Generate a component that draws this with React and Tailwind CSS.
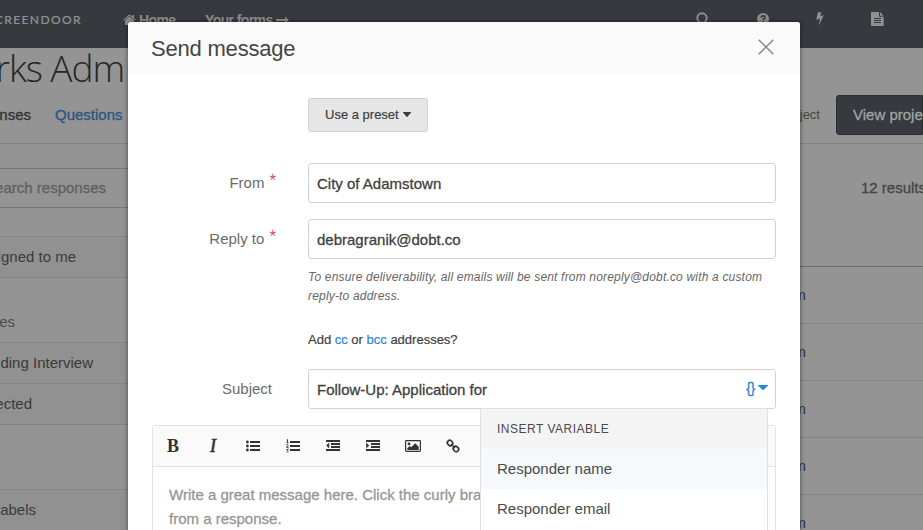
import React from "react";

const STATUS_ROWS = ["Pending Interview", "Rejected"];
const TABLE_ROWS = [1, 2, 3, 4, 5];

function HomeIcon() {
  return (
    <svg width="13" height="12" viewBox="0 0 13 12" fill="currentColor">
      <path d="M6.5 2.6 2 6.4V10.6c0 .3.2.5.5.5h2.9V7.9h2.2v3.2h2.9c.3 0 .5-.2.5-.5V6.4z" />
      <path d="M12.8 5.7 11 4.2V1H9.4v1.900L7.200 1a1 1 0 0 0-1.400 0L.2 5.700l.6.700 5.700-4.700 5.700 4.700z" />
    </svg>
  );
}

function LongArrow() {
  return (
    <svg width="13" height="8" viewBox="0 0 13 8" fill="currentColor">
      <path d="M0 3h9V.8L12.800 4 9 7.200V5H0z" />
    </svg>
  );
}

function SearchIcon() {
  return (
    <svg width="13" height="14" viewBox="0 0 13 14" fill="none" stroke="currentColor" strokeWidth="2">
      <circle cx="6" cy="6" r="4.700" />
      <path d="m9 10 3 3" />
    </svg>
  );
}

function HelpIcon() {
  return (
    <svg width="12" height="12" viewBox="0 0 12 12">
      <circle cx="6" cy="6" r="6" fill="currentColor" />
      <path d="M4 4.600C4.100 3.200 5 2.800 6 2.800c1.200 0 2 .6 2 1.600 0 1.300-1.800 1.300-1.800 2.600M6.200 8v1.600" fill="none" stroke="#36393e" strokeWidth="1.700" />
    </svg>
  );
}

function BoltIcon() {
  return (
    <svg width="8" height="14" viewBox="0 0 8 14" fill="currentColor">
      <path d="M2 .3h3.400L4.200 4l3.600-.8L2.700 13.700 3.900 6.800.2 7.700z" />
    </svg>
  );
}

function DocIcon() {
  return (
    <svg width="13" height="14" viewBox="0 0 13 14">
      <path d="M.8 0H8v4.700h4.700v8.500c0 .5-.3.800-.8.800H.8c-.5 0-.8-.3-.8-.8V.8C0 .3.3 0 .8 0zM9 .1 12.600 3.700H9z" fill="currentColor" />
      <path d="M3 6.500h7M3 8.500h7M3 10.500h7" stroke="#36393e" strokeWidth="1" />
    </svg>
  );
}

function Caret({ className }) {
  return (
    <svg className={className} viewBox="0 0 8 4" preserveAspectRatio="none" fill="currentColor">
      <path d="M.3 0h7.400c.3 0 .4.300.2.500L4.300 3.900a.4.4 0 0 1-.6 0L.1.500C-.1.300 0 0 .3 0z" />
    </svg>
  );
}

function ListUl() {
  return (
    <svg width="14" height="12" viewBox="0 0 14 12" fill="currentColor">
      <circle cx="1.400" cy="2" r="1.400" />
      <circle cx="1.400" cy="6" r="1.400" />
      <circle cx="1.400" cy="10" r="1.400" />
      <path d="M4 1h10v2H4zM4 5h10v2H4zM4 9h10v2H4z" />
    </svg>
  );
}

function ListOl() {
  return (
    <svg width="14" height="14" viewBox="0 0 14 14" fill="currentColor">
      <path d="M4 2h10v2H4zM4 6h10v2H4zM4 10h10v2H4z" />
      <path d="M.6 1.200 1.500.5v3.200M.4 3.700h2.200M.4 5.700c.8-.7 1.900-.2 1.600.6L.5 8.400h2.200M.4 10.400h1.800L1.400 11.500c1.400 0 1.200 1.900-.9 1.500" fill="none" stroke="currentColor" strokeWidth=".9" />
    </svg>
  );
}

function Indent({ outdent = false }) {
  return (
    <svg width="14" height="12" viewBox="0 0 14 12" fill="currentColor">
      <path d="M0 0h14v2H0zM5 3h9v2H5zM5 6h9v2H5zM0 9h14v2H0z" />
      {outdent ? <path d="M3.200 2.600v5.800L.2 5.500z" /> : <path d="M.2 2.600v5.800L3.200 5.500z" />}
    </svg>
  );
}

function ImageIcon() {
  return (
    <svg width="16" height="12" viewBox="0 0 16 12" fill="currentColor">
      <rect x=".6" y=".6" width="14.800" height="10.800" rx=".8" fill="none" stroke="currentColor" strokeWidth="1.200" />
      <circle cx="4" cy="3.900" r="1.400" />
      <path d="M2.300 10V8.200l2.400-2.300 1.500 1.400 4-4 3.500 3.400V10z" />
    </svg>
  );
}

function LinkIcon() {
  return (
    <svg width="14" height="14" viewBox="0 0 14 14" fill="none" stroke="currentColor" strokeWidth="1.700">
      <rect x="1.300" y="1.600" width="5.600" height="4.800" rx="2.300" transform="rotate(45 4 4)" />
      <rect x="7.100" y="7.600" width="5.600" height="4.800" rx="2.300" transform="rotate(45 10 10)" />
      <path d="m5 5 4 4" strokeWidth="1.400" />
    </svg>
  );
}

function Tool({ children }) {
  return <div className="flex h-10 w-10 items-center justify-center">{children}</div>;
}

function SideRow({ children, className = "" }) {
  return (
    <div className={`flex h-[41px] items-center justify-end whitespace-nowrap border-b border-[#838383] bg-[#919191] text-[15px] text-[#3a3a3a] ${className}`}>
      {children}
    </div>
  );
}

function Label({ children, required = false }) {
  return (
    <div className={`flex h-10 w-[156px] shrink-0 items-center justify-end text-[15px] text-[#6b6b6b] ${required ? "pr-8" : "pr-9"}`}>
      <span>{children}</span>
      {required && <span className="-mt-[5px] ml-[5px] text-[17px] text-[#dc4a68]">*</span>}
    </div>
  );
}

function Field({ children, className = "" }) {
  return (
    <div className={`flex h-10 flex-1 items-center rounded-[3px] border border-[#d2d2d2] bg-white px-2 pt-[2px] text-[15px] text-[#3f3f3f] [-webkit-text-stroke:0.3px_currentColor] ${className}`}>
      {children}
    </div>
  );
}

function Page() {
  return (
    <div className="flex h-full flex-col bg-[#949494]">
      <nav className="flex h-12 shrink-0 justify-between bg-[#36393e] text-[#8f9092]">
        <div className="flex h-10 items-center">
          <div className="flex w-[82px] justify-end font-['Lato',sans-serif] text-[12px] font-medium tracking-[1.400px] [-webkit-text-stroke:0.2px_currentColor]">SCREENDOOR</div>
          <div className="ml-[41px] flex w-[82px] items-center gap-[3px] text-[14px] font-bold tracking-[-0.600px]"><HomeIcon />Home</div>
          <div className="flex items-center gap-[3px] text-[14px] font-bold tracking-[-0.600px]">Your forms<LongArrow /></div>
        </div>
        <div className="flex h-[38px] items-center pr-[39px]">
          <div className="flex w-[13px]"><SearchIcon /></div>
          <div className="ml-12 flex w-3"><HelpIcon /></div>
          <div className="ml-[47px] flex w-2"><BoltIcon /></div>
          <div className="ml-[47px] flex w-[13px]"><DocIcon /></div>
        </div>
      </nav>
      <header className="h-24 shrink-0 border-b border-[#838383]">
        <div className="flex h-[39px] w-[124px] items-center justify-end whitespace-nowrap font-['Open_Sans',sans-serif] text-[37px] font-light tracking-[-1.100px] text-[#262626]">Parks Adm</div>
        <div className="mt-2 flex h-10 items-center text-[15px] [-webkit-text-stroke:0.3px_currentColor]">
          <div className="flex w-[31px] justify-end text-[#333]">Responses</div>
          <div className="ml-6 text-[#2b5480]">Questions</div>
          <div className="ml-auto text-[13px] text-[#444] [-webkit-text-stroke:0]">Edit project</div>
          <div className="ml-4 flex h-10 w-[87px] items-center whitespace-nowrap rounded-l-[3px] border border-[#2a2d31] bg-[#36393e] pl-4 text-[#a3a3a3]">View project</div>
        </div>
      </header>
      <div className="flex min-h-0 flex-1">
        <aside className="w-[200px]">
          <div className="mt-6 flex h-10 items-center border-y border-[#777]">
            <div className="flex w-[106px] justify-end whitespace-nowrap text-[15px] text-[#606060] [-webkit-text-stroke:0.3px_currentColor]">Search responses</div>
          </div>
          <div className="h-[29px] border-b border-[#838383]" />
          <SideRow className="pr-[124px]">Assigned to me</SideRow>
          <div className="flex h-[65px] items-end justify-end border-b border-[#838383] pb-[9px] pr-[185px] text-[15px] text-[#4b4b4b]">Statuses</div>
          {STATUS_ROWS.map((name, i) => (
            <SideRow key={name} className={i === 0 ? "pr-[107px]" : "pr-[168px]"}>{name}</SideRow>
          ))}
          <div className="h-[65px] border-b border-[#838383]" />
          <SideRow className="pr-[164px]">Labels</SideRow>
        </aside>
        <main className="flex-1">
          <div className="flex h-[123px] justify-end border-b border-[#6d6d6d] pt-[33px]">
            <div className="w-[62px] whitespace-nowrap text-[15px] leading-[22px] text-[#444] [-webkit-text-stroke:0.3px_currentColor]">12 results</div>
          </div>
          {TABLE_ROWS.map((row) => (
            <div key={row} className="flex h-[57px] items-center justify-end border-b border-[#838383] pr-[117px] text-[15px] text-[#333]">5:12pm</div>
          ))}
        </main>
      </div>
    </div>
  );
}

function VariableMenu() {
  return (
    <div className="absolute right-2 top-[39px] z-10 h-[200px] w-[288px] border border-[#dfdfdf] bg-white text-[15px] text-[#4a4a4a]">
      <div className="flex h-10 items-center bg-[#f4f4f4] pl-4 text-[12px] tracking-[0.500px]">INSERT VARIABLE</div>
      <div className="flex h-10 items-center bg-[#f5f9fc] pl-4">Responder name</div>
      <div className="flex h-10 items-center pl-4">Responder email</div>
    </div>
  );
}

function Modal() {
  return (
    <div className="h-[600px] w-[672px] overflow-hidden rounded-t-[3px] bg-white shadow-[0_0_5px_rgba(0,0,0,0.500)]">
      <div className="flex h-[52px] items-center justify-between bg-[#fafafa] pl-[23px] pr-[26px] text-[22px] text-[#454545]">
        <h1 className="tracking-[-0.200px]">Send message</h1>
        <svg width="16" height="16" viewBox="0 0 16 16" stroke="#858585" strokeWidth="1.400" className="-mt-[3px]">
          <path d="m.7.700 14.600 14.600M15.300.700.7 15.300" />
        </svg>
      </div>
      <div className="flex flex-col px-6 pt-6">
        <div className="ml-[156px] flex h-[34px] w-[120px] items-center gap-1 rounded-[3px] border border-[#cfcfcf] bg-[#e6e6e6] pl-4 text-[13px] text-[#3f3f3f] [-webkit-text-stroke:0.2px_currentColor]">
          Use a preset<Caret className="-mt-px h-[5px] w-2" />
        </div>
        <div className="mt-[31px] flex"><Label required>From</Label><Field>City of Adamstown</Field></div>
        <div className="mt-4 flex"><Label required>Reply to</Label><Field>debragranik@dobt.co</Field></div>
        <p className="ml-[156px] mt-[9px] whitespace-nowrap text-[12px] italic leading-[19px] tracking-[0.180px] text-[#666]">
          To ensure deliverability, all emails will be sent from noreply@dobt.co with a custom<br />reply-to address.
        </p>
        <p className="ml-[156px] mt-6 text-[13px] leading-5 text-[#3f3f3f] [-webkit-text-stroke:0.2px_currentColor]">
          Add <a className="text-[#2b86d1]">cc</a> or <a className="text-[#2b86d1]">bcc</a> addresses?
        </p>
        <div className="relative mt-[19px] flex">
          <Label>Subject</Label>
          <Field>
            Follow-Up: Application for
            <span className="ml-auto -mr-px flex items-center gap-[3px] text-[#2b86d1]">
              <span className="-mt-1 text-[14px] tracking-[-0.300px]">{"{}"}</span><Caret className="-mt-[5px] h-[5px] w-[10px]" />
            </span>
          </Field>
          <VariableMenu />
        </div>
        <div className="mt-4 h-[200px] rounded-[3px] border border-[#e2e2e2]">
          <div className="flex h-[41px] border-b border-[#e2e2e2] bg-[#fafafa] text-[#333]">
            <Tool><span className="font-['Liberation_Serif',serif] text-[18px] font-bold">B</span></Tool>
            <Tool><span className="font-['Liberation_Serif',serif] text-[18px] italic [-webkit-text-stroke:0.6px_currentColor]">I</span></Tool>
            <Tool><ListUl /></Tool>
            <Tool><ListOl /></Tool>
            <Tool><Indent outdent /></Tool>
            <Tool><Indent /></Tool>
            <Tool><ImageIcon /></Tool>
            <Tool><LinkIcon /></Tool>
          </div>
          <p className="whitespace-nowrap px-4 pt-4 text-[15px] leading-6 text-[#969696] [-webkit-text-stroke:0.3px_currentColor]">
            Write a great message here. Click the curly braces<br />from a response.
          </p>
        </div>
      </div>
    </div>
  );
}

export default function App() {
  return (
    <div className="relative h-[530px] w-[923px] overflow-hidden font-['Liberation_Sans',Arial,sans-serif]">
      <Page />
      <div className="absolute inset-0 flex items-start pl-32 pt-[22px]">
        <Modal />
      </div>
    </div>
  );
}
